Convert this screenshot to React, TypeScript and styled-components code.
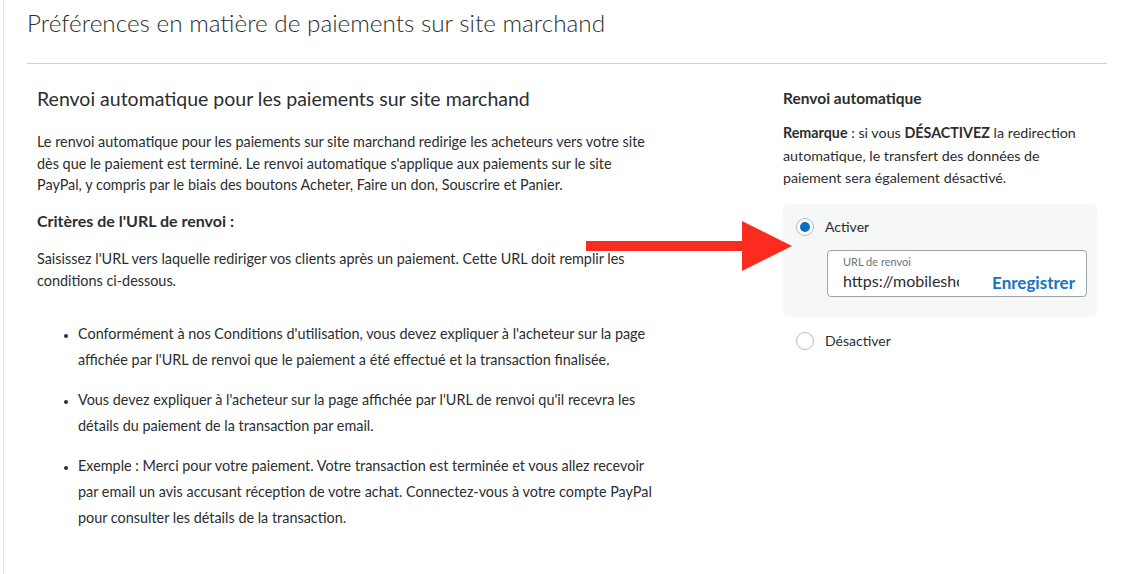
import React from 'react';
import styled, { createGlobalStyle } from 'styled-components';

const GlobalStyle = createGlobalStyle`
  html, body { margin: 0; padding: 0; background: #fff; }
  body {
    font-family: Lato, "Noto Sans", "Liberation Sans", sans-serif;
    color: #2c2e2f;
    -webkit-font-smoothing: antialiased;
  }
  * { box-sizing: border-box; }
`;

const Shell = styled.div`
  position: relative;
  width: 1126px;
  height: 574px;
  overflow: hidden;
`;

const Page = styled.div`
  margin-left: 3px;
  border-left: 1px solid #e3e5e6;
  height: 574px;
  padding: 7px 19px 0 23px;
`;

const Title = styled.h1`
  margin: 0;
  font-size: 24.3px;
  font-weight: 300;
  line-height: 32px;
  color: #2c2e2f;
`;

const Divider = styled.div`
  margin-top: 24px;
  height: 1px;
  background: #cbd2d6;
`;

const Content = styled.div`
  display: flex;
  justify-content: space-between;
  padding: 23px 10px 0;
`;

const Main = styled.section`
  width: 660px;
`;

const SectionTitle = styled.h2`
  margin: 0;
  font-size: 19.5px;
  font-weight: 400;
  line-height: 24px;
`;

const Paragraph = styled.p<{ $top: number; $lh?: number }>`
  margin: ${p => p.$top}px 0 0;
  font-size: 14.4px;
  line-height: ${p => p.$lh ?? 21.5}px;
  white-space: nowrap;
`;

const Strong = styled.p<{ $top: number }>`
  margin: ${p => p.$top}px 0 0;
  font-size: 16px;
  font-weight: 700;
  line-height: 21.5px;
`;

const List = styled.ul`
  margin: 29px 0 0;
  padding-left: 41px;
  list-style: disc;
`;

const Item = styled.li`
  font-size: 14.4px;
  line-height: 26px;
  white-space: nowrap;
  & + & { margin-top: 14px; }
  &::marker { font-size: 11px; }
`;

const Aside = styled.aside`
  width: 314px;
`;

const AsideTitle = styled.h3`
  margin: 0;
  font-size: 15.5px;
  font-weight: 700;
  line-height: 22px;
`;

const Note = styled.p`
  margin: 13px 0 0;
  font-size: 14.3px;
  line-height: 22.5px;
  white-space: nowrap;
  b { font-weight: 700; }
`;

const OptionBox = styled.div`
  margin-top: 14.5px;
  background: #f6f7f7;
  border-radius: 6px;
  padding: 14px 10px 20px 13px;
`;

const RadioRow = styled.label<{ $top?: number }>`
  display: flex;
  align-items: center;
  gap: 11px;
  margin-top: ${p => p.$top ?? 0}px;
  padding-left: ${p => (p.$top ? 13 : 0)}px;
  font-size: 14px;
  line-height: 18px;
`;

const Radio = styled.span<{ $checked?: boolean }>`
  position: relative;
  width: 18px;
  height: 18px;
  border-radius: 50%;
  border: 1px solid #b7bcbf;
  background: #fff;
  flex-shrink: 0;
  &::after {
    content: '';
    display: ${p => (p.$checked ? 'block' : 'none')};
    position: absolute;
    left: 3px;
    top: 3px;
    width: 10px;
    height: 10px;
    border-radius: 50%;
    background: #0a6fc2;
  }
`;

const Field = styled.div`
  margin: 14px 0 0 31px;
  height: 47px;
  border: 1px solid #9da3a6;
  border-radius: 4px;
  background: #fff;
  display: flex;
`;

const FieldBody = styled.div`
  display: flex;
  flex-direction: column;
  padding: 4px 0 0 15px;
`;

const FieldLabel = styled.span`
  font-size: 11px;
  line-height: 14px;
  color: #6c7378;
`;

const FieldInput = styled.input`
  width: 116px;
  margin-top: 2px;
  border: 0;
  padding: 0;
  background: transparent;
  font-family: Lato, "Noto Sans", sans-serif;
  font-size: 16px;
  line-height: 20px;
  color: #2c2e2f;
  outline: none;
`;

const SaveButton = styled.button`
  margin-left: auto;
  align-self: flex-end;
  border: 0;
  background: none;
  padding: 0 11px 3px 0;
  font-family: Lato, "Noto Sans", sans-serif;
  font-size: 17px;
  font-weight: 700;
  line-height: 20px;
  color: #1a73c0;
`;

const Arrow = styled.svg`
  position: absolute;
  left: 586px;
  top: 221px;
`;

export default function App() {
  return (
    <Shell>
      <GlobalStyle />
      <Page>
        <Title>Préférences en matière de paiements sur site marchand</Title>
        <Divider />
        <Content>
          <Main>
            <SectionTitle>Renvoi automatique pour les paiements sur site marchand</SectionTitle>
            <Paragraph $top={20}>
              Le renvoi automatique pour les paiements sur site marchand redirige les acheteurs vers votre site
              <br />
              dès que le paiement est terminé. Le renvoi automatique s'applique aux paiements sur le site
              <br />
              PayPal, y compris par le biais des boutons Acheter, Faire un don, Souscrire et Panier.
            </Paragraph>
            <Strong $top={14.5}>Critères de l'URL de renvoi :</Strong>
            <Paragraph $top={16.5} $lh={22}>
              Saisissez l'URL vers laquelle rediriger vos clients après un paiement. Cette URL doit remplir les
              <br />
              conditions ci-dessous.
            </Paragraph>
            <List>
              <Item>
                Conformément à nos Conditions d'utilisation, vous devez expliquer à l'acheteur sur la page
                <br />
                affichée par l'URL de renvoi que le paiement a été effectué et la transaction finalisée.
              </Item>
              <Item>
                Vous devez expliquer à l'acheteur sur la page affichée par l'URL de renvoi qu'il recevra les
                <br />
                détails du paiement de la transaction par email.
              </Item>
              <Item>
                Exemple : Merci pour votre paiement. Votre transaction est terminée et vous allez recevoir
                <br />
                par email un avis accusant réception de votre achat. Connectez-vous à votre compte PayPal
                <br />
                pour consulter les détails de la transaction.
              </Item>
            </List>
          </Main>
          <Aside>
            <AsideTitle>Renvoi automatique</AsideTitle>
            <Note>
              <b>Remarque</b> : si vous <b>DÉSACTIVEZ</b> la redirection
              <br />
              automatique, le transfert des données de
              <br />
              paiement sera également désactivé.
            </Note>
            <OptionBox>
              <RadioRow>
                <Radio $checked />
                Activer
              </RadioRow>
              <Field>
                <FieldBody>
                  <FieldLabel>URL de renvoi</FieldLabel>
                  <FieldInput readOnly value="https://mobileshop.example.com" />
                </FieldBody>
                <SaveButton>Enregistrer</SaveButton>
              </Field>
            </OptionBox>
            <RadioRow $top={15}>
              <Radio />
              Désactiver
            </RadioRow>
          </Aside>
        </Content>
      </Page>
      <Arrow width="206" height="50" viewBox="0 0 206 50">
        <rect x="0" y="20" width="157" height="10" fill="#fb2c1f" />
        <polygon points="156,0 206,25 156,50" fill="#fb2c1f" />
      </Arrow>
    </Shell>
  );
}
